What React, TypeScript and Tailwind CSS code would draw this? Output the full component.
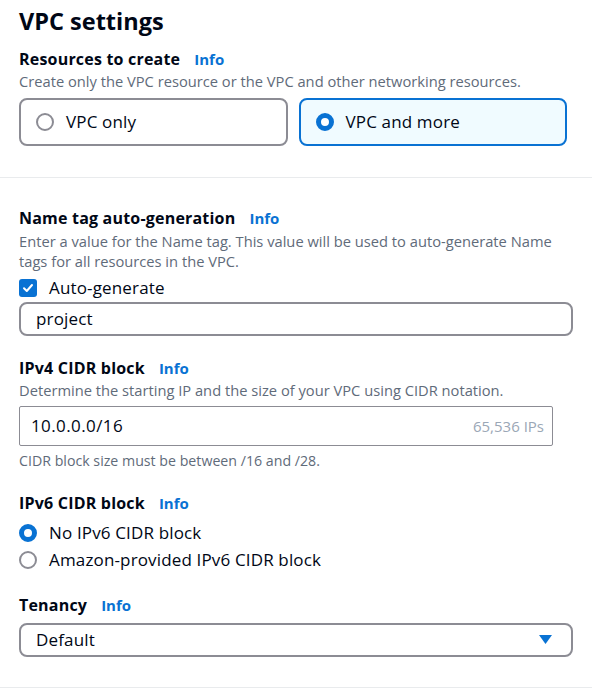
import React from "react";

const Info = () => (
  <span className="ml-[14px] text-[15px] font-bold text-[#0972d3]">Info</span>
);

const Radio = ({ checked }: { checked: boolean }) =>
  checked ? (
    <span className="inline-block w-[18px] h-[18px] rounded-full border-[5px] border-[#0972d3] bg-white shrink-0" />
  ) : (
    <span className="inline-block w-[18px] h-[18px] rounded-full border-2 border-[#8c8c94] bg-white shrink-0" />
  );

const Heading = ({ children, className = "" }: { children: React.ReactNode; className?: string }) => (
  <div className={"flex items-baseline h-[22px] leading-[22px] " + className}>
    <span className="text-[16px] font-bold tracking-[0.2px] text-[#000716]">{children}</span>
    <Info />
  </div>
);

const App = () => {
  return (
    <div
      className="w-[592px] h-[690px] bg-white text-[#000716] overflow-hidden"
      style={{ fontFamily: '"Open Sans", "Noto Sans", sans-serif' }}
    >
      <div className="pl-[19px] pt-[6px]">
        <h1 className="text-[23.5px] leading-[30px] font-bold">VPC settings</h1>

        <Heading className="mt-[12px]">Resources to create</Heading>
        <p className="mt-[1px] text-[14.7px] leading-[20px] text-[#5f6b7a]">
          Create only the VPC resource or the VPC and other networking resources.
        </p>

        <div className="mt-[7px] grid grid-cols-2 gap-[11px] w-[548px]">
          <div className="h-[48px] flex items-center gap-[12px] pl-[15px] border-2 border-[#8c8c94] rounded-[8px] bg-white">
            <Radio checked={false} />
            <span className="text-[17px] tracking-[0.15px]">VPC only</span>
          </div>
          <div className="h-[48px] flex items-center gap-[12px] pl-[15px] border-2 border-[#0972d3] rounded-[8px] bg-[#f0fbff]">
            <Radio checked />
            <span className="text-[17px] tracking-[0.15px]">VPC and more</span>
          </div>
        </div>
      </div>

      <div className="mt-[31px] h-px bg-[#e9ebed]" />

      <div className="pl-[19px]">
        <Heading className="mt-[29px]">Name tag auto-generation</Heading>
        <p className="mt-[2px] w-[545px] text-[14.7px] leading-[20px] text-[#5f6b7a]">
          Enter a value for the Name tag. This value will be used to auto-generate Name tags for all resources in the VPC.
        </p>
        <div className="mt-[7px] flex items-center gap-[12px] h-[20px]">
          <span className="w-[18px] h-[18px] rounded-[3px] bg-[#0972d3] flex items-center justify-center shrink-0">
            <svg width="12" height="12" viewBox="0 0 12 12" fill="none">
              <path d="M2 6.2 L4.8 9 L10 3" stroke="white" strokeWidth="2" strokeLinecap="round" strokeLinejoin="round" />
            </svg>
          </span>
          <span className="text-[17px] tracking-[0.15px]">Auto-generate</span>
        </div>
        <div className="mt-[4px] w-[554px] h-[34px] border-2 border-[#8c8c94] rounded-[8px] flex items-center pl-[15px] text-[17px] tracking-[0.15px]">
          project
        </div>

        <Heading className="mt-[21px]">IPv4 CIDR block</Heading>
        <p className="mt-[1px] text-[14.7px] leading-[20px] text-[#5f6b7a]">
          Determine the starting IP and the size of your VPC using CIDR notation.
        </p>
        <div className="mt-[6px] w-[534px] h-[40px] border border-[#8c8c94] rounded-[2px] flex items-center justify-between pl-[11px] pr-[8px]">
          <span className="text-[17px] tracking-[0.4px]">10.0.0.0/16</span>
          <span className="text-[15px] text-[#9ba7b6]">65,536 IPs</span>
        </div>
        <p className="mt-[6px] text-[14.2px] leading-[18px] text-[#5f6b7a]">
          CIDR block size must be between /16 and /28.
        </p>

        <Heading className="mt-[22px]">IPv6 CIDR block</Heading>
        <div className="mt-[9px] flex flex-col gap-[7px]">
          <div className="flex items-center gap-[12px] h-[20px]">
            <Radio checked />
            <span className="text-[17px] tracking-[0.15px]">No IPv6 CIDR block</span>
          </div>
          <div className="flex items-center gap-[12px] h-[20px]">
            <Radio checked={false} />
            <span className="text-[17px] tracking-[0.15px]">Amazon-provided IPv6 CIDR block</span>
          </div>
        </div>

        <Heading className="mt-[24px]">Tenancy</Heading>
        <div className="mt-[7px] w-[554px] h-[34px] border-2 border-[#8c8c94] rounded-[8px] flex items-center justify-between pl-[15px] pr-[19px] text-[17px] tracking-[0.15px]">
          <span>Default</span>
          <svg width="13" height="10" viewBox="0 0 13 10">
            <path d="M0 0 H13 L6.5 9 Z" fill="#0972d3" />
          </svg>
        </div>
      </div>

      <div className="mt-[30px] h-px bg-[#e9ebed]" />
    </div>
  );
};

export default App;
